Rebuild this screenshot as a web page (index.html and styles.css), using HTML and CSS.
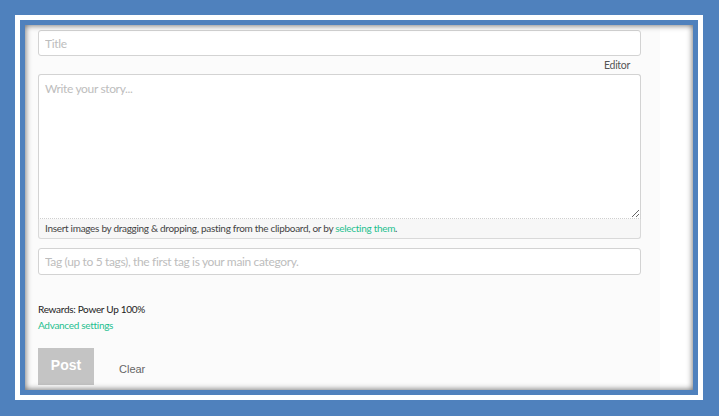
FILE: index.html
```html
<!DOCTYPE html>
<html>
<head>
<meta charset="utf-8">
<link rel="stylesheet" href="styles.css">
</head>
<body>
<div class="frame">
  <div class="panel">
    <div class="form-col">
      <input class="field title" type="text" placeholder="Title">
      <div class="editor-label">Editor</div>
      <textarea class="story" placeholder="Write your story..."></textarea>
      <div class="dropzone">Insert images by dragging &amp; dropping, pasting from the clipboard, or by <a class="link">selecting them</a>.</div>
      <input class="field tags" type="text" placeholder="Tag (up to 5 tags), the first tag is your main category.">
      <div class="rewards">Rewards: Power Up 100%</div>
      <div class="advanced"><a class="link">Advanced settings</a></div>
      <div class="actions">
        <button class="post">Post</button>
        <button class="clear">Clear</button>
      </div>
    </div>
    <div class="side-col"></div>
  </div>
</div>
</body>
</html>
```
FILE: styles.css
```css
html, body {
  margin: 0;
  padding: 0;
  background: #4f81bd;
  width: 719px;
  height: 416px;
  overflow: hidden;
}
.frame {
  margin: 15px;
  border: 5px solid #ffffff;
  width: 678px;
  height: 375px;
}
.panel {
  position: relative;
  margin: 5px;
  height: 365px;
  background: #ffffff;
  display: flex;
}
.panel::after {
  content: "";
  position: absolute;
  inset: 0;
  box-shadow: inset 0 0 6px rgba(0, 0, 0, 0.65);
  pointer-events: none;
}
.form-col {
  width: 635px;
  box-sizing: border-box;
  background: #fbfbfb;
  padding: 5px 19px 0 13px;
  display: flex;
  flex-direction: column;
  font-family: Lato, "Open Sans", sans-serif;
  letter-spacing: -0.3px;
}
.side-col {
  flex: 1;
  background: #ffffff;
}
.field {
  display: block;
  box-sizing: border-box;
  width: 603px;
  margin: 0;
  border: 1px solid #d3d3d3;
  border-radius: 3px;
  background: #ffffff;
  padding: 0 6px;
  font-family: Lato, "Open Sans", sans-serif;
  font-size: 12px;
  letter-spacing: -0.35px;
  color: #333;
  outline: none;
}
.field::placeholder, .story::placeholder {
  color: #bdbdbd;
}
.title {
  height: 26px;
}
.editor-label {
  height: 18px;
  line-height: 18px;
  text-align: right;
  padding-right: 11px;
  font-size: 10.5px;
  color: #555;
}
.story {
  display: block;
  box-sizing: border-box;
  width: 603px;
  height: 145px;
  margin: 0;
  border: 1px solid #d3d3d3;
  border-bottom: 1px dotted #cfcfcf;
  border-radius: 3px 3px 0 0;
  background: #ffffff;
  padding: 6px 6px;
  font-family: Lato, "Open Sans", sans-serif;
  font-size: 12px;
  letter-spacing: -0.35px;
  resize: vertical;
  outline: none;
}
.dropzone {
  box-sizing: border-box;
  width: 603px;
  height: 20px;
  line-height: 19px;
  border: 1px solid #d9d9d9;
  border-top: none;
  border-radius: 0 0 3px 3px;
  background: #f7f7f7;
  padding: 0 6px;
  font-size: 10px;
  color: #444;
  white-space: nowrap;
}
.link {
  color: #1fbf8f;
  text-decoration: none;
}
.tags {
  margin-top: 9px;
  height: 27px;
}
.rewards {
  margin-top: 26px;
  height: 16px;
  line-height: 16px;
  font-size: 10px;
  color: #222;
}
.advanced {
  height: 16px;
  line-height: 16px;
  font-size: 10px;
}
.actions {
  margin-top: 15px;
  display: flex;
  align-items: center;
  letter-spacing: 0;
}
.post {
  width: 56px;
  height: 37px;
  margin: 0;
  border: none;
  background: #c4c4c4;
  color: #ffffff;
  font-family: "Liberation Sans", Arial, sans-serif;
  font-weight: bold;
  font-size: 14px;
  padding: 0 0 3px 0;
}
.clear {
  margin: 4px 0 0 25px;
  padding: 0;
  border: none;
  background: transparent;
  color: #666;
  font-family: "Liberation Sans", Arial, sans-serif;
  font-size: 11px;
}
```
